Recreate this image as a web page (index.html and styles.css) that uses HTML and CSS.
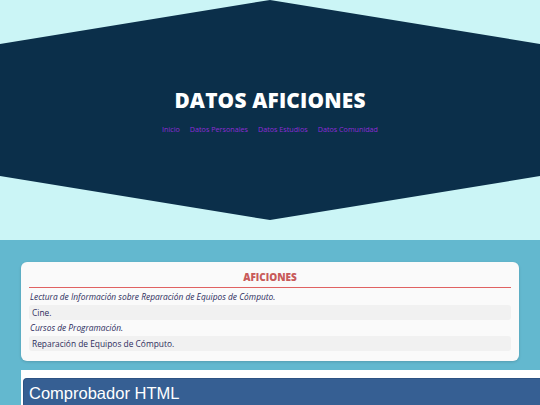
FILE: index.html
```html
<!DOCTYPE html>
<html lang="es">
<head>
<meta charset="utf-8">
<title>Datos Aficiones</title>
<link rel="stylesheet" href="styles.css">
</head>
<body>
<header class="hero">
  <h1 class="hero-title">DATOS AFICIONES</h1>
  <nav class="hero-nav">
    <a href="#">Inicio</a>
    <a href="#">Datos Personales</a>
    <a href="#">Datos Estudios</a>
    <a href="#">Datos Comunidad</a>
  </nav>
</header>
<main class="content">
  <section class="card">
    <h2 class="card-title">AFICIONES</h2>
    <ul class="list">
      <li class="item odd">Lectura de Información sobre Reparación de Equipos de Cómputo.</li>
      <li class="item even">Cine.</li>
      <li class="item odd">Cursos de Programación.</li>
      <li class="item even">Reparación de Equipos de Cómputo.</li>
    </ul>
  </section>
  <div class="checker">
    <div class="checker-bar">Comprobador HTML</div>
  </div>
</main>
</body>
</html>
```
FILE: styles.css
```css
html, body {
  margin: 0;
  padding: 0;
}
body {
  background: #cbf5f6;
  font-family: "Open Sans", "Noto Sans", sans-serif;
  overflow: hidden;
}
.hero {
  height: 220px;
  background: #0b2f4a;
  clip-path: polygon(50% 0, 100% 20%, 100% 80%, 50% 100%, 0 80%, 0 20%);
  display: flex;
  flex-direction: column;
  align-items: center;
  padding-top: 86px;
  box-sizing: border-box;
  margin-bottom: 20px;
}
.hero-title {
  margin: 0;
  color: #ffffff;
  font-size: 20.8px;
  font-weight: 800;
  line-height: 28px;
  letter-spacing: 0.2px;
}
.hero-nav {
  margin-top: 10px;
  display: flex;
  gap: 10px;
}
.hero-nav a {
  color: #8e2bd6;
  text-decoration: none;
  font-size: 7.2px;
  line-height: 10px;
}
.content {
  background: #63b8cf;
  padding: 22px 0 0 21px;
  height: 200px;
}
.card {
  width: 482px;
  background: #fafafa;
  border-radius: 6px;
  padding: 7px 8px 10px;
  box-shadow: 0 1px 3px rgba(0,0,0,0.15);
}
.card-title {
  margin: 0;
  text-align: center;
  color: #c85a5a;
  font-size: 10px;
  font-weight: 800;
  line-height: 17px;
  border-bottom: 1.5px solid #e06262;
  padding-bottom: 1px;
}
.list {
  list-style: none;
  margin: 0;
  padding: 1px 0 0;
}
.item {
  height: 15.5px;
  line-height: 15.5px;
  font-size: 8.4px;
  color: #2c2c5c;
  border-radius: 3px;
}
.item.odd {
  font-style: italic;
  padding-left: 1px;
}
.item.even {
  background: #f1f1f1;
  padding-left: 3px;
}
.checker {
  margin-top: 9px;
  background: #ffffff;
  padding: 8px 0 0 2px;
  height: 40px;
}
.checker-bar {
  background: #365f93;
  border: 1px solid #2d5283;
  border-right: none;
  border-radius: 4px 0 0 4px;
  color: #ffffff;
  font-family: "Liberation Sans", Arial, sans-serif;
  font-size: 16.5px;
  line-height: 28px;
  padding-left: 5px;
}
```
